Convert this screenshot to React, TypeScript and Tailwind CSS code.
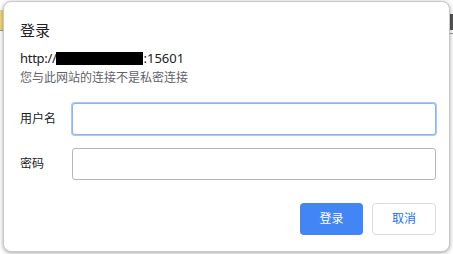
export default function App() {
  return (
    <div
      className="relative w-[453px] h-[254px] overflow-hidden bg-white"
      style={{ fontFamily: '"Noto Sans", "Noto Sans CJK SC", sans-serif' }}
    >
      {/* browser chrome peeking from behind the dialog */}
      <div className="absolute left-0 top-[10px] w-[4px] h-[20px] bg-[#f3d77a]" />
      <div className="absolute left-0 top-[30px] w-[4px] h-[1px] bg-[#9a9a9a]" />
      <div className="absolute right-0 top-[14px] w-[3px] h-[16px] bg-[#555]" />
      <div className="absolute right-0 top-[33px] w-[3px] h-[1px] bg-[#9a9a9a]" />

      <div className="absolute left-[3px] top-[1px] w-[447px] h-[251px] rounded-[8px] border border-[#c8c8c8] bg-white shadow-[0_1px_4px_rgba(0,0,0,0.35)]">
        <div className="flex flex-col pl-[16px] pr-[13px] pt-[18px]">
          <div className="text-[15px] leading-[20px] text-[#202124]">登录</div>

          <div className="mt-[9px] flex items-center h-[18px] text-[13px] leading-[18px] text-[#202124]">
            <span className="tracking-[-0.3px]">http://</span>
            <span className="inline-block w-[87px] h-[13px] bg-black" />
            <span>:15601</span>
          </div>
          <div className="mt-[3px] text-[12px] leading-[16px] text-[#5f6368]">
            您与此网站的连接不是私密连接
          </div>

          <div className="mt-[17px] flex flex-col gap-[13px]">
            <div className="flex items-center">
              <label className="w-[52px] text-[12px] text-[#202124]">用户名</label>
              <div className="h-[32px] flex-1 rounded-[3px] border border-[#8ab4f8] shadow-[0_0_0_1px_#a8c7fa] bg-white" />
            </div>
            <div className="flex items-center">
              <label className="w-[52px] text-[12px] text-[#202124]">密码</label>
              <div className="h-[32px] flex-1 rounded-[3px] border border-[#b6b6b6] bg-white" />
            </div>
          </div>

          <div className="mt-[23px] flex justify-end gap-[9px]">
            <button className="w-[63px] h-[32px] rounded-[4px] bg-[#4285f4] text-[12px] text-white">
              登录
            </button>
            <button className="w-[64px] h-[32px] rounded-[4px] border border-[#dadce0] bg-white text-[12px] text-[#1a73e8]">
              取消
            </button>
          </div>
        </div>
      </div>
    </div>
  )
}
